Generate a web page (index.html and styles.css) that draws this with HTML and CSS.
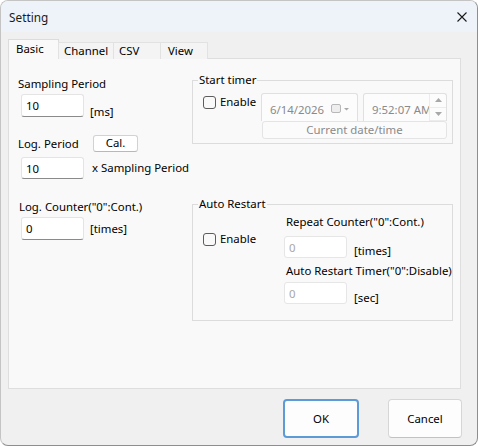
FILE: index.html
```html
<!DOCTYPE html>
<html lang="en">
<head>
    <meta charset="UTF-8">
    <meta name="viewport" content="width=device-width, initial-scale=1.0">
    <title>Setting</title>
    <link rel="stylesheet" href="styles.css">
</head>
<body>
<div class="window">
    <div class="titlebar">
        <span class="title">Setting</span>
        <svg class="close" width="10" height="10" viewBox="0 0 10 10">
            <path d="M0.5 0.5 L9.5 9.5 M9.5 0.5 L0.5 9.5" stroke="#1a1a1a" stroke-width="1.1" fill="none"/>
        </svg>
    </div>

    <div class="content">
        <div class="tabs">
            <div class="tab active tab-basic">Basic</div>
            <div class="tab tab-channel">Channel</div>
            <div class="tab tab-csv">CSV</div>
            <div class="tab tab-view">View</div>
        </div>

        <div class="panel">
            <div class="col-left">
                <div class="label first">Sampling Period</div>
                <div class="input-row">
                    <input class="text-box" type="text" value="10">
                    <span class="unit unit-low">[ms]</span>
                </div>

                <div class="cal-row">
                    <span class="label-fixed">Log. Period</span>
                    <button class="small-btn">Cal.</button>
                </div>
                <div class="input-row row-2">
                    <input class="text-box" type="text" value="10">
                    <span class="unit unit-mid">x Sampling Period</span>
                </div>

                <div class="label counter">Log. Counter("0":Cont.)</div>
                <div class="input-row">
                    <input class="text-box" type="text" value="0">
                    <span class="unit unit-mid">[times]</span>
                </div>
            </div>

            <div class="col-right">
                <fieldset class="group group-timer">
                    <legend>Start timer</legend>
                    <div class="group-inner timer-inner">
                        <label class="check-label timer-check">
                            <span class="check"></span>Enable
                        </label>
                        <div class="pickers">
                            <div class="picker-row">
                                <div class="picker date-picker">
                                    <span>6/14/2026</span>
                                    <svg width="20" height="10" viewBox="0 0 20 10">
                                        <rect x="0.5" y="0.5" width="9" height="8" rx="1.5" fill="#eeeeee" stroke="#b8b8b8"/>
                                        <path d="M13 4 L18 4 L15.5 6.5 Z" fill="#a8a8a8"/>
                                    </svg>
                                </div>
                                <div class="picker time-picker">
                                    <span class="time-text">9:52:07 AM</span>
                                    <div class="spinner">
                                        <div class="spin"><svg width="7" height="4" viewBox="0 0 7 4"><path d="M0 4 L3.5 0 L7 4 Z" fill="#a8a8a8"/></svg></div>
                                        <div class="spin"><svg width="7" height="4" viewBox="0 0 7 4"><path d="M0 0 L3.5 4 L7 0 Z" fill="#a8a8a8"/></svg></div>
                                    </div>
                                </div>
                            </div>
                            <button class="current-btn">Current date/time</button>
                        </div>
                    </div>
                </fieldset>

                <fieldset class="group group-restart">
                    <legend>Auto Restart</legend>
                    <div class="group-inner restart-inner">
                        <label class="check-label restart-check">
                            <span class="check"></span>Enable
                        </label>
                        <div class="restart-fields">
                            <div class="sub-label">Repeat Counter("0":Cont.)</div>
                            <div class="input-row restart-row">
                                <input class="text-box disabled" type="text" value="0" disabled>
                                <span class="unit unit-r1">[times]</span>
                            </div>
                            <div class="sub-label second">Auto Restart Timer("0":Disable)</div>
                            <div class="input-row restart-row second">
                                <input class="text-box disabled" type="text" value="0" disabled>
                                <span class="unit unit-r2">[sec]</span>
                            </div>
                        </div>
                    </div>
                </fieldset>
            </div>
        </div>

        <div class="buttons">
            <button class="dlg-btn ok">OK</button>
            <button class="dlg-btn cancel">Cancel</button>
        </div>
    </div>
</div>
</body>
</html>
```

FILE: styles.css
```css
* {
    box-sizing: border-box;
}
body {
    margin: 0;
    font-family: "Noto Sans", "Open Sans", sans-serif;
    font-size: 11.4px;
    color: #000;
    background: #ffffff;
    white-space: nowrap;
}
.window {
    width: 478px;
    height: 446px;
    background: #f0f0f0;
    border: 1px solid #c4c4c4;
    border-right-color: #8e8e8e;
    border-bottom-color: #8e8e8e;
    border-radius: 8px;
    overflow: hidden;
}
.titlebar {
    height: 31px;
    background: #eef3f9;
    display: flex;
    align-items: center;
    justify-content: space-between;
    padding: 0 10px 0 8px;
}
.title {
    color: #1b1b1b;
    font-size: 11.8px;
}
.content {
    padding: 7px 16px 0 7px;
}

/* tabs */
.tabs {
    display: flex;
    align-items: flex-end;
    height: 20px;
    margin-bottom: -1px;
    position: relative;
    z-index: 1;
}
.tab {
    height: 17px;
    line-height: 15px;
    padding-left: 5px;
    background: #f4f4f4;
    border: 1px solid #e2e2e2;
    border-bottom: none;
    margin-left: -1px;
}
.tab.active {
    height: 20px;
    line-height: 18px;
    background: #f9f9f9;
    border-color: #dcdcdc;
    margin-left: 0;
    padding-left: 7px;
}
.tab-basic { width: 51px; }
.tab-channel { width: 56px; }
.tab-csv { width: 48px; }
.tab-view { width: 48px; padding-left: 7px; }

/* panel */
.panel {
    height: 331px;
    background: #f9f9f9;
    border: 1px solid #dedede;
    padding: 0 7px 0 8px;
    display: grid;
    grid-template-columns: 175px 261px;
}
.label {
    line-height: 16px;
    padding-left: 1px;
}
.label.first {
    margin-top: 17px;
}
.label.counter {
    margin-top: 20px;
    padding-left: 2px;
}
.input-row {
    display: flex;
    margin-top: 2px;
}
.text-box {
    width: 63px;
    height: 23px;
    margin: 0 0 0 4px;
    padding: 0 0 0 4px;
    font-family: inherit;
    font-size: 11.4px;
    color: #000;
    background: #ffffff;
    border: 1px solid #e4e4e4;
    border-bottom-color: #8a8a8a;
    border-radius: 3px;
    outline: none;
}
.unit {
    margin-left: 6px;
    line-height: 16px;
}
.unit-low {
    align-self: flex-end;
    margin-bottom: -3px;
}
.unit-mid {
    align-self: center;
}
.row-2 {
    margin-top: 6px;
}
.row-2 .text-box {
    height: 22px;
}
.row-2 .unit {
    margin-left: 8px;
}
.cal-row {
    display: flex;
    align-items: center;
    height: 16px;
    margin-top: 18px;
}
.label-fixed {
    width: 76px;
    padding-left: 1px;
}
.small-btn {
    width: 45px;
    height: 17px;
    padding: 0;
    font-family: inherit;
    font-size: 11.4px;
    line-height: 14px;
    color: #000;
    background: #ffffff;
    border: 1px solid #d2d2d2;
    border-bottom-color: #b8b8b8;
    border-radius: 3px;
}

/* group boxes */
.group {
    margin: 13px 0 0 0;
    padding: 0;
    border: 1px solid #dcdcdc;
    min-width: 0;
}
.group legend {
    margin-left: 5px;
    padding: 0 1px;
    line-height: 16px;
}
.group-inner {
    display: flex;
}
.timer-inner {
    padding: 5px 5px 4px 10px;
}
.check-label {
    display: flex;
    align-items: center;
    flex-shrink: 0;
    line-height: 16px;
    height: 16px;
}
.check {
    width: 13px;
    height: 13px;
    margin-right: 4px;
    border: 1px solid #5c5c5c;
    border-radius: 3px;
    background: #f9f9f9;
}
.timer-check {
    width: 58px;
    margin-top: 1px;
}
.pickers {
    display: flex;
    flex-direction: column;
}
.picker-row {
    display: flex;
    gap: 5px;
}
.picker {
    height: 28px;
    display: flex;
    align-items: center;
    background: #fcfcfc;
    border: 1px solid #e0e0e0;
    border-bottom: none;
    border-radius: 3px 3px 0 0;
    color: #8a8a8a;
    padding-top: 3px;
}
.date-picker {
    width: 97px;
    padding-left: 8px;
    justify-content: space-between;
    padding-right: 6px;
}
.time-picker {
    width: 84px;
    padding-left: 8px;
    padding-top: 0;
    overflow: hidden;
}
.time-text {
    width: 57px;
    overflow: hidden;
    padding-top: 3px;
}
.spinner {
    width: 17px;
    height: 27px;
    margin-left: auto;
    display: flex;
    flex-direction: column;
    border-left: 1px solid #ececec;
}
.spin {
    flex: 1;
    display: flex;
    align-items: center;
    justify-content: center;
    border-bottom: 1px solid #ececec;
}
.current-btn {
    width: 185px;
    height: 18px;
    margin-left: 1px;
    padding: 0;
    font-family: inherit;
    font-size: 11.4px;
    line-height: 14px;
    color: #8a8a8a;
    background: #fbfbfb;
    border: 1px solid #e4e4e4;
    border-radius: 3px;
}
.group-restart {
    margin-top: 52px;
}
.restart-inner {
    padding: 2px 5px 16px 10px;
}
.restart-check {
    width: 81px;
    margin-top: 17px;
}
.restart-fields {
    flex-shrink: 0;
}
.sub-label {
    line-height: 16px;
    padding-left: 2px;
}
.sub-label.second {
    margin-top: 5px;
}
.restart-row {
    margin-top: 6px;
}
.restart-row.second {
    margin-top: 3px;
}
.restart-row .text-box {
    margin-left: 0;
    height: 22px;
}
.text-box.disabled {
    color: #a8a8a8;
    border-color: #e6e6e6;
}
.unit-r1 {
    margin-left: 7px;
    align-self: flex-end;
    margin-bottom: -1px;
}
.unit-r2 {
    margin-left: 7px;
    align-self: flex-end;
    margin-bottom: -2px;
}

/* dialog buttons */
.buttons {
    display: flex;
    justify-content: flex-end;
    gap: 29px;
    margin-top: 10px;
    margin-right: -1px;
}
.dlg-btn {
    height: 39px;
    padding: 0;
    font-family: inherit;
    font-size: 11.4px;
    color: #000;
    background: #fdfdfd;
    border: 1px solid #d6d6d6;
    border-bottom-color: #c2c2c2;
    border-radius: 4px;
}
.dlg-btn.ok {
    width: 76px;
    border: 2px solid #5c9ad8;
}
.dlg-btn.cancel {
    width: 74px;
}
```
